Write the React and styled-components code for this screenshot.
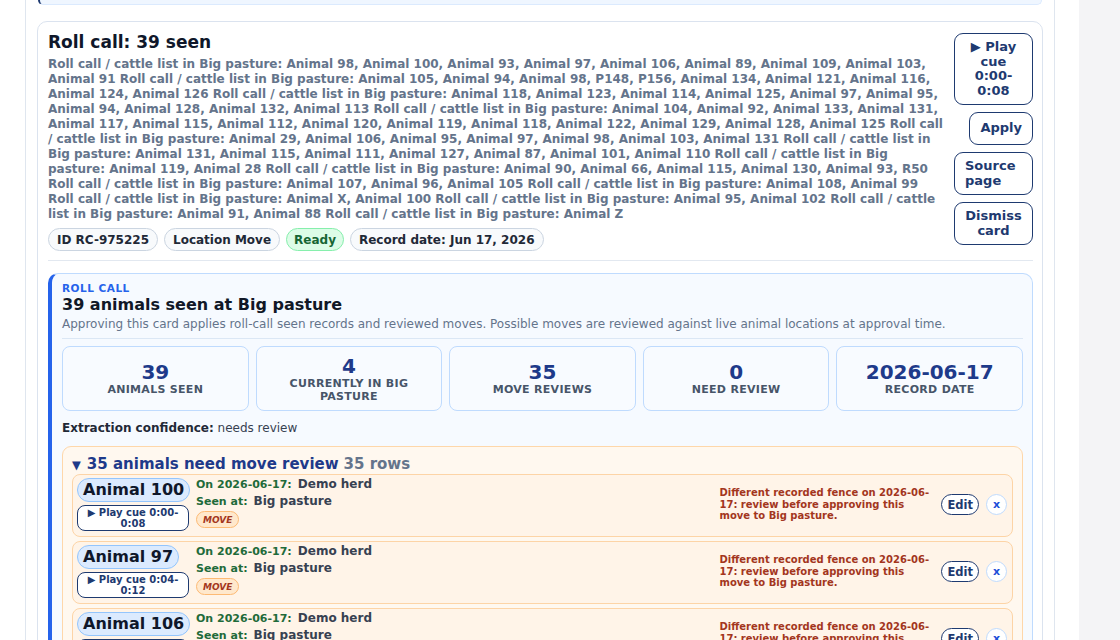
import React from 'react'
import styled, { createGlobalStyle } from 'styled-components'

const GlobalStyle = createGlobalStyle`
    body {
        margin: 0;
        background: #f4f4f6;
        font-family: "DejaVu Sans", "Liberation Sans", sans-serif;
        color: #0f172a;
    }
    * { box-sizing: border-box; }
`
const Page = styled.div`
    width: 1079px;
    height: 640px;
    overflow: hidden;
    background: #fff;
    padding-left: 25px;
`
const Column = styled.div`
    width: 1030px;
    height: 100%;
    border-left: 1px solid #dfe6ef;
    border-right: 1px solid #dfe6ef;
    padding: 0 11px;
`
const PrevCard = styled.div`
    height: 5px;
    margin: 0 1px 16px;
    background: #eff6ff;
    border: 1px solid #dbeafe;
    border-top: none;
    border-left: 2px solid #1e3a70;
    border-radius: 0 0 10px 10px;
`
const Card = styled.div`
    border: 1px solid #dbe3ef;
    border-radius: 10px;
    padding: 10px 9px 0 10px;
    background: #fff;
`
const Header = styled.div`
    display: flex;
    gap: 12px;
    padding-bottom: 9px;
    border-bottom: 1px solid #e2e8f0;
`
const HeaderMain = styled.div`
    flex: 1;
    min-width: 0;
`
const Title = styled.h2`
    margin: 0;
    font-size: 17px;
    line-height: 21px;
    font-weight: 700;
    color: #0f172a;
`
const Desc = styled.p`
    margin: 4px -4px 0 0;
    font-size: 12px;
    line-height: 15px;
    font-weight: 700;
    color: #64748b;
`
const Chips = styled.div`
    display: flex;
    gap: 6px;
    margin-top: 6px;
`
const Chip = styled.span`
    display: inline-flex;
    align-items: center;
    height: 23px;
    padding: 0 ${p => (p.$ok ? '7px' : '8px')};
    border-radius: 999px;
    font-size: 12px;
    font-weight: 700;
    border: 1px solid ${p => (p.$ok ? '#86efac' : '#cbd5e1')};
    background: ${p => (p.$ok ? '#dcfce7' : '#f8fafc')};
    color: ${p => (p.$ok ? '#166534' : '#1f2937')};
`
const Actions = styled.div`
    width: 79px;
    display: flex;
    flex-direction: column;
    align-items: flex-end;
    gap: 7px;
    padding-top: 1px;
`
const ActionButton = styled.button`
    width: ${p => (p.$fit ? 'auto' : '100%')};
    padding: ${p => (p.$fit ? '8px 10px' : '6px 10px')};
    border: 1px solid #1e3a70;
    border-radius: 9px;
    background: #fff;
    color: #1e3a70;
    font-family: inherit;
    font-size: 13px;
    line-height: 14.6px;
    font-weight: 700;
    text-align: ${p => (p.$left ? 'left' : 'center')};
`
const Panel = styled.section`
    margin-top: 12px;
    background: #f6faff;
    border: 1px solid #bfdbfe;
    border-left: 4px solid #2563eb;
    border-radius: 10px;
    padding: 7px 9px 10px 10px;
`
const Kicker = styled.div`
    font-size: 10.5px;
    line-height: 14px;
    font-weight: 700;
    letter-spacing: 0.5px;
    color: #2563eb;
`
const PanelTitle = styled.h3`
    margin: 0;
    font-size: 16px;
    line-height: 20px;
    font-weight: 700;
    color: #111827;
`
const PanelNote = styled.p`
    margin: 1px 0 0;
    padding-bottom: 6px;
    border-bottom: 1px solid #dbe7f5;
    font-size: 12px;
    line-height: 16px;
    color: #64748b;
`
const Stats = styled.div`
    display: grid;
    grid-template-columns: repeat(5, 1fr);
    gap: 7px;
    margin-top: 7px;
`
const Stat = styled.div`
    height: 65px;
    display: flex;
    flex-direction: column;
    align-items: center;
    justify-content: center;
    padding: 0 12px;
    border: 1px solid #bfdbfe;
    border-radius: 8px;
    background: #f8fbff;
    text-align: center;
`
const StatValue = styled.div`
    font-size: 20px;
    line-height: 22px;
    font-weight: 700;
    color: #1e3a8a;
`
const StatLabel = styled.div`
    font-size: 11px;
    line-height: 13px;
    font-weight: 700;
    letter-spacing: 0.3px;
    color: #475569;
    text-transform: uppercase;
`
const Confidence = styled.p`
    margin: 9px 0 0;
    font-size: 12px;
    line-height: 16px;
    color: #374151;
    b { color: #1f2937; }
`
const Review = styled.div`
    margin-top: 10px;
    background: #fff8ef;
    border: 1px solid #fed7aa;
    border-radius: 9px;
    padding: 8px 9px 9px;
`
const ReviewHead = styled.div`
    display: flex;
    align-items: baseline;
    gap: 6px;
    font-size: 15px;
    line-height: 18px;
    font-weight: 700;
    color: #1e3a8a;
`
const Caret = styled.span`
    font-size: 11.5px;
`
const RowCount = styled.span`
    color: #64748b;
    margin-left: -1px;
`
const Rows = styled.div`
    display: flex;
    flex-direction: column;
    gap: 4px;
`
const Row = styled.div`
    display: grid;
    grid-template-columns: 112px 1fr 215px auto auto;
    align-items: center;
    column-gap: 7px;
    padding: 3px 5px 5px 4px;
    background: #fff4e8;
    border: 1px solid #fdd4a6;
    border-radius: 8px;
`
const Who = styled.div`
    display: flex;
    flex-direction: column;
    align-items: flex-start;
    gap: 3px;
`
const AnimalPill = styled.span`
    padding: 1px 5px;
    border: 1px solid #93c5fd;
    border-radius: 999px;
    background: #dbeafe;
    font-size: 16px;
    line-height: 20px;
    font-weight: 700;
    white-space: nowrap;
    color: #0f172a;
`
const CueButton = styled.button`
    width: 112px;
    padding: 2px 6px 1px;
    border: 1px solid #1e3a70;
    border-radius: 8px;
    background: #fff;
    color: #1e3a70;
    font-family: inherit;
    font-size: 10px;
    line-height: 10.5px;
    font-weight: 700;
`
const Facts = styled.div`
    align-self: start;
    margin-top: -2px;
    display: flex;
    flex-direction: column;
    align-items: flex-start;
`
const Fact = styled.div`
    font-size: 11px;
    line-height: 17px;
    font-weight: 700;
    color: #1f6b3a;
    em {
        font-style: normal;
        font-size: 12px;
        margin-left: 6px;
        color: #374151;
    }
`
const MoveTag = styled.span`
    margin-top: 1px;
    padding: 2px 6px 1px;
    border: 1px solid #fdba74;
    border-radius: 999px;
    background: #ffe8cc;
    font-size: 9px;
    line-height: 12px;
    font-weight: 700;
    font-style: italic;
    color: #a3361d;
`
const Warning = styled.div`
    font-size: 10px;
    line-height: 11.5px;
    font-weight: 700;
    color: #a3361d;
`
const EditButton = styled.button`
    height: 21px;
    padding: 0 5px;
    border: 1.5px solid #1e3a70;
    border-radius: 999px;
    background: #fff;
    color: #1e3a70;
    font-family: inherit;
    font-size: 11.5px;
    font-weight: 700;
`
const CloseButton = styled.button`
    width: 21px;
    height: 21px;
    padding: 0;
    border: 1px solid #bfdbfe;
    border-radius: 50%;
    background: #fff;
    color: #1d4ed8;
    font-family: inherit;
    font-size: 11px;
    font-weight: 700;
`

const description = 'Roll call / cattle list in Big pasture: Animal 98, Animal 100, Animal 93, Animal 97, Animal 106, Animal 89, Animal 109, Animal 103, Animal 91 Roll call / cattle list in Big pasture: Animal 105, Animal 94, Animal 98, P148, P156, Animal 134, Animal 121, Animal 116, Animal 124, Animal 126 Roll call / cattle list in Big pasture: Animal 118, Animal 123, Animal 114, Animal 125, Animal 97, Animal 95, Animal 94, Animal 128, Animal 132, Animal 113 Roll call / cattle list in Big pasture: Animal 104, Animal 92, Animal 133, Animal 131, Animal 117, Animal 115, Animal 112, Animal 120, Animal 119, Animal 118, Animal 122, Animal 129, Animal 128, Animal 125 Roll call / cattle list in Big pasture: Animal 29, Animal 106, Animal 95, Animal 97, Animal 98, Animal 103, Animal 131 Roll call / cattle list in Big pasture: Animal 131, Animal 115, Animal 111, Animal 127, Animal 87, Animal 101, Animal 110 Roll call / cattle list in Big pasture: Animal 119, Animal 28 Roll call / cattle list in Big pasture: Animal 90, Animal 66, Animal 115, Animal 130, Animal 93, R50 Roll call / cattle list in Big pasture: Animal 107, Animal 96, Animal 105 Roll call / cattle list in Big pasture: Animal 108, Animal 99 Roll call / cattle list in Big pasture: Animal X, Animal 100 Roll call / cattle list in Big pasture: Animal 95, Animal 102 Roll call / cattle list in Big pasture: Animal 91, Animal 88 Roll call / cattle list in Big pasture: Animal Z'

const stats = [
    { value: '39', label: 'Animals seen' },
    { value: '4', label: 'Currently in Big pasture' },
    { value: '35', label: 'Move reviews' },
    { value: '0', label: 'Need review' },
    { value: '2026-06-17', label: 'Record date' },
]

const rows = [
    { name: 'Animal 100', cue: '0:00-0:08' },
    { name: 'Animal 97', cue: '0:04-0:12' },
    { name: 'Animal 106', cue: '0:08-0:16' },
]

const App = () => {
    return (
        <Page>
            <GlobalStyle />
            <Column>
                <PrevCard />
                <Card>
                    <Header>
                        <HeaderMain>
                            <Title>Roll call: 39 seen</Title>
                            <Desc>{description}</Desc>
                            <Chips>
                                <Chip>ID RC-975225</Chip>
                                <Chip>Location Move</Chip>
                                <Chip $ok>Ready</Chip>
                                <Chip>Record date: Jun 17, 2026</Chip>
                            </Chips>
                        </HeaderMain>
                        <Actions>
                            <ActionButton>▶ Play cue 0:00-0:08</ActionButton>
                            <ActionButton $fit>Apply</ActionButton>
                            <ActionButton $left>Source page</ActionButton>
                            <ActionButton>Dismiss card</ActionButton>
                        </Actions>
                    </Header>
                    <Panel>
                        <Kicker>ROLL CALL</Kicker>
                        <PanelTitle>39 animals seen at Big pasture</PanelTitle>
                        <PanelNote>Approving this card applies roll-call seen records and reviewed moves. Possible moves are reviewed against live animal locations at approval time.</PanelNote>
                        <Stats>
                            {stats.map(s => (
                                <Stat key={s.label}>
                                    <StatValue>{s.value}</StatValue>
                                    <StatLabel>{s.label}</StatLabel>
                                </Stat>
                            ))}
                        </Stats>
                        <Confidence><b>Extraction confidence:</b> needs review</Confidence>
                        <Review>
                            <ReviewHead>
                                <Caret>▼</Caret>
                                <span>35 animals need move review</span>
                                <RowCount>35 rows</RowCount>
                            </ReviewHead>
                            <Rows>
                                {rows.map(r => (
                                    <Row key={r.name}>
                                        <Who>
                                            <AnimalPill>{r.name}</AnimalPill>
                                            <CueButton>▶ Play cue {r.cue}</CueButton>
                                        </Who>
                                        <Facts>
                                            <Fact>On 2026-06-17:<em>Demo herd</em></Fact>
                                            <Fact>Seen at:<em>Big pasture</em></Fact>
                                            <MoveTag>MOVE</MoveTag>
                                        </Facts>
                                        <Warning>Different recorded fence on 2026-06-17: review before approving this move to Big pasture.</Warning>
                                        <EditButton>Edit</EditButton>
                                        <CloseButton>x</CloseButton>
                                    </Row>
                                ))}
                            </Rows>
                        </Review>
                    </Panel>
                </Card>
            </Column>
        </Page>
    )
}

export default App
